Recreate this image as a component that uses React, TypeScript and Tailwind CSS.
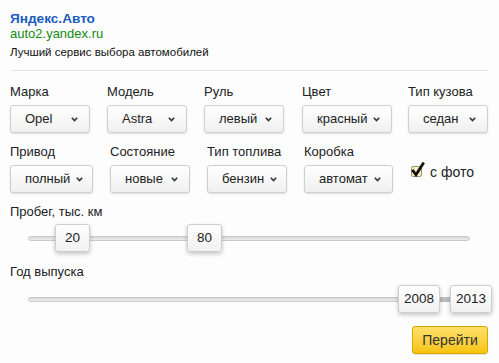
import React from 'react';

const Chevron = () => (
  <svg width="7" height="5" viewBox="0 0 7 5" className="shrink-0">
    <path d="M0.8 0.8 L3.5 3.6 L6.2 0.8" fill="none" stroke="#333" strokeWidth="1.6" />
  </svg>
);

const Select: React.FC<{ value: string; width: string }> = ({ value, width }) => (
  <div
    className={`${width} h-[28px] flex items-center pl-[14px] pr-[11px] rounded-[3px] border border-[#cfcfcf] bg-gradient-to-b from-white to-[#f0f0f0] shadow-[0_1px_2px_rgba(0,0,0,0.12)] text-[13px] text-[#222]`}
  >
    <span>{value}</span>
    <span className="ml-auto pl-[6px] flex items-center">
      <Chevron />
    </span>
  </div>
);

const Field: React.FC<{ label: string; value: string; col: string; width: string }> = ({ label, value, col, width }) => (
  <div className={`${col} flex flex-col gap-[5px]`}>
    <div className="h-[16px] leading-[16px] text-[13px] text-[#222]">{label}</div>
    <Select value={value} width={width} />
  </div>
);

const Thumb: React.FC<{ label: string; left: string; width: string }> = ({ label, left, width }) => (
  <div
    className={`absolute top-0 ${left} ${width} h-[28px] flex items-center justify-center rounded-[3px] border border-[#cdcdcd] bg-gradient-to-b from-white to-[#f1f1f1] shadow-[0_2px_4px_rgba(0,0,0,0.22)] text-[13.5px] text-[#222]`}
  >
    {label}
  </div>
);

const Track: React.FC<{ children: React.ReactNode; range?: React.ReactNode }> = ({ children, range }) => (
  <div className="relative ml-[18px] w-[442px] h-[28px]">
    <div className="absolute left-0 right-0 top-[12px] h-[5px] rounded-full border border-[#c9c9c9] bg-gradient-to-b from-[#d9d9d9] to-[#eeeeee]" />
    {range}
    {children}
  </div>
);

export default function App() {
  return (
    <div className="w-[499px] h-[363px] bg-[#fdfdfd] px-[10px] pt-[10px] font-['Liberation_Sans',Arial,sans-serif] text-[#222]">
      <div className="h-[18px] leading-[18px] text-[13.6px] font-bold text-[#1a5cbf]">Яндекс.Авто</div>
      <div className="mt-[-1px] h-[14px] leading-[14px] text-[13px] text-[#138a13]">auto2.yandex.ru</div>
      <div className="mt-[4px] h-[14px] leading-[14px] text-[11.5px] text-[#111]">Лучший сервис выбора автомобилей</div>

      <div className="mt-[11px] h-px w-[478px] bg-[#e4e4e4]" />

      <div className="mt-[13px] flex">
        <Field col="w-[97px]" width="w-[80px]" label="Марка" value="Opel" />
        <Field col="w-[97px]" width="w-[80px]" label="Модель" value="Astra" />
        <Field col="w-[98px]" width="w-[80px]" label="Руль" value="левый" />
        <Field col="w-[106px]" width="w-[90px]" label="Цвет" value="красный" />
        <Field col="w-[80px]" width="w-[80px]" label="Тип кузова" value="седан" />
      </div>

      <div className="mt-[11px] flex">
        <Field col="w-[100px]" width="w-[83px]" label="Привод" value="полный" />
        <Field col="w-[97px]" width="w-[80px]" label="Состояние" value="новые" />
        <Field col="w-[97px]" width="w-[80px]" label="Тип топлива" value="бензин" />
        <Field col="w-[106px]" width="w-[89px]" label="Коробка" value="автомат" />
        <div className="pt-[18px] pl-[1px] flex items-start gap-[5px]">
          <svg width="14" height="16" viewBox="0 0 14 16" className="shrink-0">
            <rect x="0.5" y="4.5" width="10" height="10" rx="1.5" fill="#f6edc2" stroke="#9d9170" />
            <path d="M2.2 9 L5 12.8 L12 1.8" fill="none" stroke="#111" strokeWidth="2.8" strokeLinecap="square" strokeLinejoin="miter" />
          </svg>
          <span className="text-[14px] leading-[16px] mt-[2px] text-[#222]">с фото</span>
        </div>
      </div>

      <div className="mt-[11px] h-[16px] leading-[16px] text-[13px]">Пробег, тыс. км</div>
      <div className="mt-[4px]">
        <Track>
          <Thumb label="20" left="left-[27px]" width="w-[35px]" />
          <Thumb label="80" left="left-[159px]" width="w-[35px]" />
        </Track>
      </div>

      <div className="mt-[12px] h-[16px] leading-[16px] text-[13px]">Год выпуска</div>
      <div className="mt-[5px]">
        <Track range={<div className="absolute left-[408px] w-[16px] top-[12px] h-[5px] bg-[#bdbdbd]" />}>
          <Thumb label="2008" left="left-[370px]" width="w-[42px]" />
          <Thumb label="2013" left="left-[422px]" width="w-[42px]" />
        </Track>
      </div>

      <div className="mt-[13px] w-[478px] flex justify-end">
        <button className="w-[76px] h-[28px] rounded-[3px] border border-[#d6a700] bg-gradient-to-b from-[#ffe066] to-[#f6c400] text-[14px] text-[#333] shadow-[0_1px_1px_rgba(0,0,0,0.1)]">
          Перейти
        </button>
      </div>
    </div>
  );
}
